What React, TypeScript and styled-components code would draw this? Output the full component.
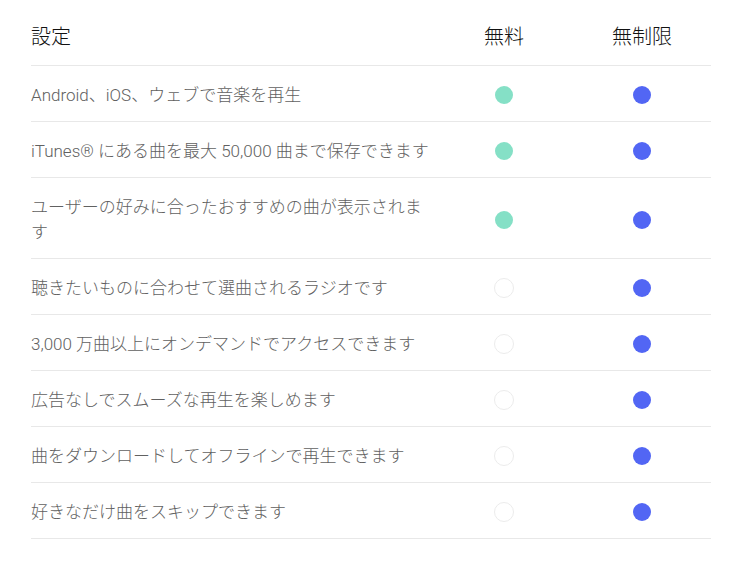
import React from "react";
import styled, { createGlobalStyle } from "styled-components";

const Global = createGlobalStyle`
  html, body { margin: 0; padding: 0; background: #fff; }
  body { font-family: Roboto, "Noto Sans CJK JP", sans-serif; }
`;

const Page = styled.div`
  padding: 0 33px 0 31px;
`;

const Table = styled.div`
  display: grid;
  grid-template-columns: 404px 138px 138px;
`;

const HeadCell = styled.div<{ $center?: boolean }>`
  height: 66px;
  display: flex;
  align-items: center;
  justify-content: ${(p) => (p.$center ? "center" : "flex-start")};
  padding-top: 6px;
  box-sizing: border-box;
  font-size: 20px;
  font-weight: 300;
  color: #111;
  border-bottom: 1px solid #e8e8e8;
`;

const Cell = styled.div<{ $center?: boolean }>`
  display: flex;
  align-items: center;
  justify-content: ${(p) => (p.$center ? "center" : "flex-start")};
  padding: 17px 0 13px;
  min-height: 25px;
  font-size: 17px;
  font-weight: 300;
  line-height: 25px;
  color: #616161;
  border-bottom: 1px solid #e8e8e8;
`;

const Dot = styled.span<{ $kind: "free" | "paid" | "none" }>`
  display: block;
  box-sizing: border-box;
  margin-bottom: 1px;
  width: ${(p) => (p.$kind === "none" ? "20px" : "18px")};
  height: ${(p) => (p.$kind === "none" ? "20px" : "18px")};
  border-radius: 50%;
  background: ${(p) =>
    p.$kind === "free" ? "#85e0c6" : p.$kind === "paid" ? "#5266f4" : "transparent"};
  border: ${(p) => (p.$kind === "none" ? "1px solid #ececec" : "none")};
`;

const rows: { label: string; free: boolean }[] = [
  { label: "Android、iOS、ウェブで音楽を再生", free: true },
  { label: "iTunes® にある曲を最大 50,000 曲まで保存できます", free: true },
  { label: "ユーザーの好みに合ったおすすめの曲が表示されます", free: true },
  { label: "聴きたいものに合わせて選曲されるラジオです", free: false },
  { label: "3,000 万曲以上にオンデマンドでアクセスできます", free: false },
  { label: "広告なしでスムーズな再生を楽しめます", free: false },
  { label: "曲をダウンロードしてオフラインで再生できます", free: false },
  { label: "好きなだけ曲をスキップできます", free: false },
];

export default function App() {
  return (
    <Page>
      <Global />
      <Table>
        <HeadCell>設定</HeadCell>
        <HeadCell $center>無料</HeadCell>
        <HeadCell $center>無制限</HeadCell>
        {rows.map((r) => (
          <React.Fragment key={r.label}>
            <Cell>{r.label}</Cell>
            <Cell $center>
              <Dot $kind={r.free ? "free" : "none"} />
            </Cell>
            <Cell $center>
              <Dot $kind="paid" />
            </Cell>
          </React.Fragment>
        ))}
      </Table>
    </Page>
  );
}
